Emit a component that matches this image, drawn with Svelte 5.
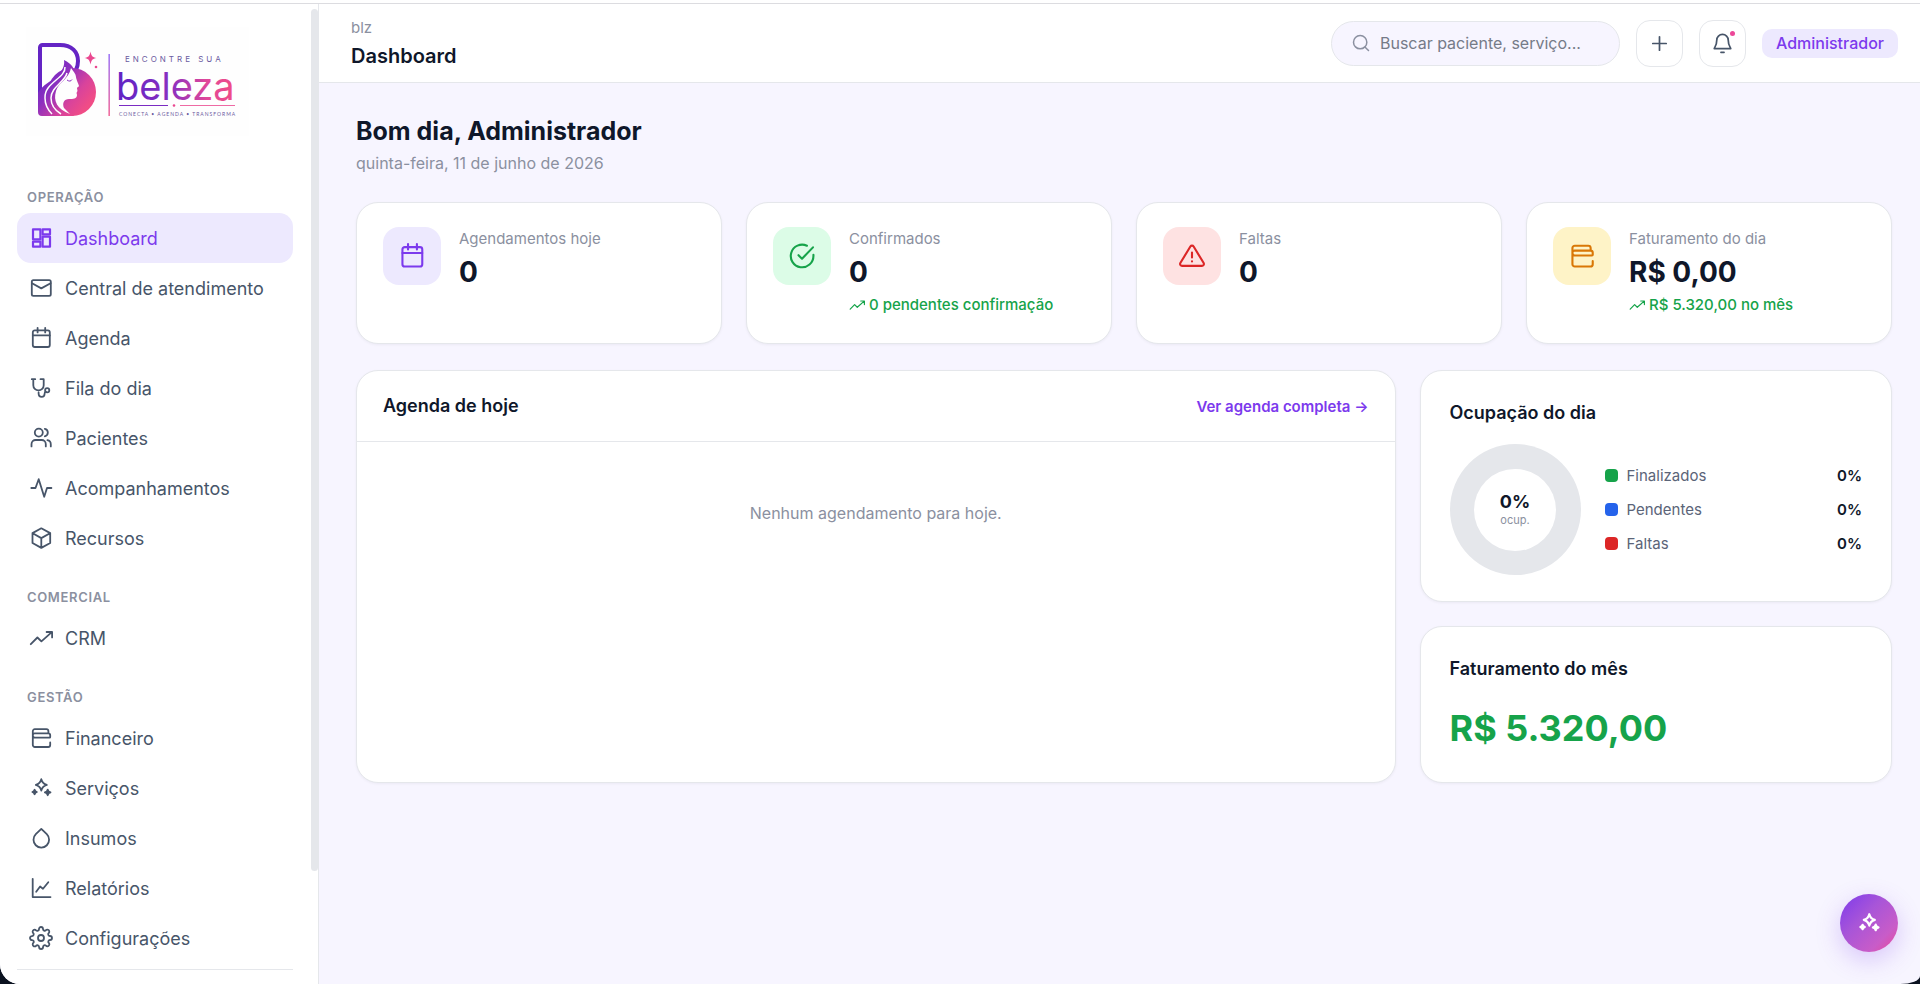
<script>
    const ICONS = {
        dashboard: '<rect x="4" y="3.300" width="7.400" height="10"/><rect x="4" y="15.700" width="7.400" height="5"/><rect x="13.600" y="3.300" width="7.400" height="5"/><rect x="13.600" y="10.700" width="7.400" height="10"/>',
        mail: '<rect x="2.8" y="4.2" width="19" height="15.6" rx="1.6"/><path d="M3 7.2l9.3 5.2 9.3-5.2"/>',
        calendar: '<rect x="3.8" y="4.4" width="17" height="16.6" rx="2"/><path d="M3.8 9.4h17M8.6 1.8v4.6M16.2 1.8v4.6"/>',
        stethoscope: '<path d="M6.2 3.2H2.8M4.3 3.2v6a5.2 5.2 0 0 0 10.4 0v-6h-3.2M9.6 16.4v.9c0 2.2 1.2 3.6 3.1 3.6 2 0 2.9-1.5 2.9-3.2 0-1.1.4-1.8 1.2-2"/><circle cx="18.2" cy="14.2" r="2.1"/>',
        users: '<circle cx="9.8" cy="6.6" r="4"/><path d="M15.8 2.8a3.9 3.9 0 0 1 0 7.6M2.5 20.4v-2.2a4.2 4.2 0 0 1 4.2-4.2h5.9a4.2 4.2 0 0 1 4.2 4.2v2.2M18.4 14.2a4.2 4.2 0 0 1 3.4 4.2v2"/>',
        activity: '<path d="M2.3 12h4.2L9.7 3.2l5.5 17.6L18 12h4.4"/>',
        box: '<path d="M12.3 2.3l8.9 4.8v9.9l-8.900 4.900-8.800-4.900V7.100zM3.700 7.300l8.600 4.800 8.700-4.800M12.300 12.100v9.600"/>',
        trend: '<path d="M1.8 18.2l6.6-6.7 4 3.9L22.8 6.2M17.6 6h5.5v5.4"/>',
        wallet: '<path d="M21.2 16.4v2.600a2 2 0 0 1-2 2H5.800a2 2 0 0 1-2-2V5.200a2 2 0 0 1 2-2h11.600a2 2 0 0 1 2 2v2.200M3.800 9.300c0-1 .8-1.900 1.900-1.900h13.600a1.900 1.900 0 0 1 1.900 1.900V11a.6.6 0 0 1-.6.600H5.700c-1.100 0-1.900-1-1.900-2.300z"/>',
        sparkles: '<path d="M12.3 3.200c.9 3.500 2 4.700 5.500 5.700-3.500 1-4.600 2.200-5.500 5.700-.9-3.500-2-4.700-5.500-5.700 3.500-1 4.600-2.200 5.500-5.700z"/><path fill="currentColor" d="M5.600 13.800l.8 1.400 1.400.8-1.400.8-.8 1.400-.8-1.400-1.400-.8 1.400-.8zM18.700 13.600l.9 1.900 1.900.9-1.900.9-.9 1.900-.9-1.900-1.900-.9 1.900-.9z"/>',
        drop: '<path d="M12.3 2.900l5.500 5.300a7.800 7.800 0 1 1-11 0z"/>',
        chart: '<path d="M3.7 2.800v18.300h17.800M7.200 15.800l3.900-5.300 2.900 2.300 5.300-6.600"/>',
        settings: '<circle cx="12" cy="12" r="3"/><path d="M19.4 15a1.65 1.65 0 0 0 .33 1.82l.06.06a2 2 0 0 1 0 2.83 2 2 0 0 1-2.83 0l-.06-.06a1.65 1.65 0 0 0-1.82-.33 1.65 1.65 0 0 0-1 1.51V21a2 2 0 0 1-2 2 2 2 0 0 1-2-2v-.09A1.65 1.65 0 0 0 9 19.4a1.65 1.65 0 0 0-1.82.33l-.06.06a2 2 0 0 1-2.83 0 2 2 0 0 1 0-2.83l.06-.06a1.65 1.65 0 0 0 .33-1.82 1.65 1.65 0 0 0-1.51-1H3a2 2 0 0 1-2-2 2 2 0 0 1 2-2h.09A1.65 1.65 0 0 0 4.6 9a1.65 1.65 0 0 0-.33-1.82l-.06-.06a2 2 0 0 1 0-2.83 2 2 0 0 1 2.83 0l.06.06a1.65 1.65 0 0 0 1.82.33H9a1.65 1.65 0 0 0 1-1.51V3a2 2 0 0 1 2-2 2 2 0 0 1 2 2v.09a1.65 1.65 0 0 0 1 1.51 1.65 1.65 0 0 0 1.82-.33l.06-.06a2 2 0 0 1 2.83 0 2 2 0 0 1 0 2.83l-.06.06a1.65 1.65 0 0 0-.33 1.82V9a1.65 1.65 0 0 0 1.51 1H21a2 2 0 0 1 2 2 2 2 0 0 1-2 2h-.09a1.65 1.65 0 0 0-1.51 1z"/>',
        check: '<path d="M21.800 11v1a9.700 9.700 0 1 1-5.600-8.800"/><path d="M9 11.300l3 3 9.400-9.700"/>',
        alert: '<path d="M10.600 3.900L2 18a1.700 1.700 0 0 0 1.500 2.500h17A1.700 1.700 0 0 0 22 18L13.400 3.900a1.650 1.650 0 0 0-2.800 0z"/><path d="M12 9v4.200M12 16.600v.1"/>',
        search: '<circle cx="11" cy="11" r="8"/><path d="M21 21l-4-4"/>',
        plus: '<path d="M12 5v14M5 12h14"/>',
        bell: '<path d="M18 8.500a6 6 0 0 0-12 0c0 6-2.600 8-2.600 8.800h17.200c0-.8-2.600-2.800-2.600-8.800zM10.400 21.200h3.200"/>'
    };

    const MENU = [
        {
            title: 'OPERAÇÃO',
            items: [
                { label: 'Dashboard', icon: 'dashboard' },
                { label: 'Central de atendimento', icon: 'mail' },
                { label: 'Agenda', icon: 'calendar' },
                { label: 'Fila do dia', icon: 'stethoscope' },
                { label: 'Pacientes', icon: 'users' },
                { label: 'Acompanhamentos', icon: 'activity' },
                { label: 'Recursos', icon: 'box' }
            ]
        },
        {
            title: 'COMERCIAL',
            items: [{ label: 'CRM', icon: 'trend' }]
        },
        {
            title: 'GESTÃO',
            items: [
                { label: 'Financeiro', icon: 'wallet' },
                { label: 'Serviços', icon: 'sparkles' },
                { label: 'Insumos', icon: 'drop' },
                { label: 'Relatórios', icon: 'chart' },
                { label: 'Configurações', icon: 'settings' }
            ]
        }
    ];

    const stats = [
        { label: 'Agendamentos hoje', value: '0', icon: 'calendar', tone: 'purple' },
        { label: 'Confirmados', value: '0', icon: 'check', tone: 'green', delta: '0 pendentes confirmação' },
        { label: 'Faltas', value: '0', icon: 'alert', tone: 'red' },
        { label: 'Faturamento do dia', value: 'R$ 0,00', icon: 'wallet', tone: 'amber', delta: 'R$ 5.320,00 no mês' }
    ];

    const legend = [
        { label: 'Finalizados', value: 0, tone: 'green' },
        { label: 'Pendentes', value: 0, tone: 'blue' },
        { label: 'Faltas', value: 0, tone: 'red' }
    ];

    let active = $state('Dashboard');
    let search = $state('');
</script>

{#snippet icon(name)}
    <svg class="icon" viewBox="0 0 24 24" aria-hidden="true">{@html ICONS[name]}</svg>
{/snippet}

<div class="window">
    <div class="topline"></div>
    <div class="shell">
        <aside class="sidebar">
            <svg class="logo" viewBox="26 27 223 109" role="img" aria-label="Encontre sua beleza">
                <defs>
                    <linearGradient id="mark" gradientUnits="userSpaceOnUse" x1="42" y1="60" x2="92" y2="100">
                        <stop offset="0" stop-color="#5f22c4" />
                        <stop offset="0.4" stop-color="#8a2fc0" />
                        <stop offset="0.75" stop-color="#d8439c" />
                        <stop offset="1" stop-color="#f04c86" />
                    </linearGradient>
                    <linearGradient id="word" gradientUnits="userSpaceOnUse" x1="118" y1="0" x2="236" y2="0">
                        <stop offset="0" stop-color="#5f22c4" />
                        <stop offset="0.45" stop-color="#8a2fc0" />
                        <stop offset="0.75" stop-color="#e0479a" />
                        <stop offset="1" stop-color="#f04c86" />
                    </linearGradient>
                    <linearGradient id="bar" x1="0" y1="0" x2="0" y2="1">
                        <stop offset="0" stop-color="#8b5cf6" />
                        <stop offset="1" stop-color="#f04c86" />
                    </linearGradient>
                </defs>
                <rect x="26" y="27" width="223" height="109" fill="#fefefe" />
                <!-- letra B -->
                <path d="M40 112V47.500a2.500 2.500 0 0 1 2.500-2.500H60c12 0 18 7 18 16 0 4-1 7-2 9" fill="none" stroke="#6424c4" stroke-width="4" />
                <circle cx="72" cy="92" r="24" fill="url(#mark)" />
                <path d="M38 93c4-8 14-12 20-18 4-4 7-9 6-15 8 4 12 9 10 16L64 100l10 16H42a4 4 0 0 1-4-4z" fill="url(#mark)" />
                <!-- rosto e cabelo -->
                <path d="M71 68c2 3 5 6 5 9 0 2 3 8 3 9s-2 1-2 2 1 3 0 4 0 2 0 3c0 4-4 4-8 4-5 0-7 4-5 9l6 6c-13-5-17-13-14-23 2-8 13-12 15-23z" fill="#fefefe" />
                <path d="M65 67c1 11-21 16-20 31 0 7 3 12 7 16M67 73c-2 9-16 14-16 25 0 8 5 13 10 16" fill="none" stroke="#fefefe" stroke-width="1.5" />
                <path d="M67 80c2 1.500 4 1.500 5-.5" fill="none" stroke="#8a2fc0" stroke-width="1" />
                <path d="M90.500 51.500c.8 4.500 2 5.700 6 6.500-4 .8-5.200 2-6 6.500-.8-4.500-2-5.700-6-6.500 4-.8 5.200-2 6-6.500z" fill="#ea4890" />
                <circle cx="96" cy="67" r="1.3" fill="#ea4890" />
                <rect x="108.500" y="54" width="1.300" height="62" fill="url(#bar)" />
                <text class="logo-top" x="125" y="62">ENCONTRE SUA</text>
                <text class="logo-word" x="116" y="100">beleza</text>
                <path d="M119 105.500h49" stroke="#7a2bc2" />
                <path d="M180 105.500h55" stroke="#ee6aa4" />
                <circle cx="174" cy="105.500" r="1.3" fill="#ea4890" />
                <text class="logo-tag" x="119" y="116">CONECTA • AGENDA • TRANSFORMA</text>
            </svg>

            <nav>
                {#each MENU as group}
                    <div class="group">
                        <h2>{group.title}</h2>
                        {#each group.items as item}
                            <a href="#{item.icon}" class:active={active === item.label} onclick={() => (active = item.label)}>
                                {@render icon(item.icon)}
                                <span>{item.label}</span>
                            </a>
                        {/each}
                    </div>
                {/each}
            </nav>
            <div class="sidebar-footer"></div>
            <div class="thumb"></div>
        </aside>

        <div class="page">
            <header>
                <div class="heading">
                    <span>blz</span>
                    <strong>Dashboard</strong>
                </div>
                <label class="search">
                    {@render icon('search')}
                    <input type="text" aria-label="Buscar" placeholder="Buscar paciente, serviço..." bind:value={search} />
                </label>
                <button class="square" aria-label="Novo">{@render icon('plus')}</button>
                <button class="square" aria-label="Notificações">
                    {@render icon('bell')}
                    <span class="dot"></span>
                </button>
                <span class="role">Administrador</span>
            </header>

            <main>
                <h1>Bom dia, Administrador</h1>
                <p class="date">quinta-feira, 11 de junho de 2026</p>

                <section class="stats">
                    {#each stats as s}
                        <article class="card stat">
                            <div class="stat-icon {s.tone}">{@render icon(s.icon)}</div>
                            <div>
                                <div class="stat-label">{s.label}</div>
                                <div class="stat-value">{s.value}</div>
                                {#if s.delta}
                                    <div class="stat-delta">{@render icon('trend')}{s.delta}</div>
                                {/if}
                            </div>
                        </article>
                    {/each}
                </section>

                <section class="panels">
                    <article class="card agenda">
                        <div class="agenda-head">
                            <h3>Agenda de hoje</h3>
                            <a href="#agenda">Ver agenda completa →</a>
                        </div>
                        <p class="empty">Nenhum agendamento para hoje.</p>
                    </article>

                    <div class="side">
                        <article class="card box">
                            <h3>Ocupação do dia</h3>
                            <div class="occupancy">
                                <div class="donut">
                                    <div class="hole">
                                        <strong>0%</strong>
                                        <span>ocup.</span>
                                    </div>
                                </div>
                                <ul>
                                    {#each legend as l}
                                        <li>
                                            <i class={l.tone}></i>
                                            <span>{l.label}</span>
                                            <b>{l.value}%</b>
                                        </li>
                                    {/each}
                                </ul>
                            </div>
                        </article>
                        <article class="card box">
                            <h3>Faturamento do mês</h3>
                            <div class="total">R$ 5.320,00</div>
                        </article>
                    </div>
                </section>
            </main>
        </div>
    </div>
    <button class="fab" aria-label="Assistente">{@render icon('sparkles')}</button>
</div>

<style>
:global(body) {
    margin: 0;
    background: #0b1220;
}

.window {
    min-height: 100vh;
    display: flex;
    flex-direction: column;
    background: #f7f5ff;
    border-bottom-left-radius: 20px;
    border-bottom-right-radius: 20px 8px;
    overflow: hidden;
    color: #0f172a;
    font-family: Inter, "Open Sans", sans-serif;
    font-size: 15px;
}

.window * {
    box-sizing: border-box;
}

.topline {
    height: 4px;
    background: #fff;
    border-bottom: 1px solid #dcdce0;
}

.shell {
    flex: 1;
    display: flex;
}

h1, h2, h3, p, ul {
    margin: 0;
    padding: 0;
}

button, input {
    font: inherit;
}

.icon {
    width: 24px;
    height: 24px;
    flex: none;
    fill: none;
    stroke: currentColor;
    stroke-width: 1.8;
    stroke-linecap: round;
    stroke-linejoin: round;
}

/* menu lateral */
.sidebar {
    position: relative;
    width: 319px;
    height: calc(100vh - 4px);
    flex: none;
    padding: 23px 25px 0 17px;
    background: #fff;
    border-right: 1px solid #e5e7eb;
    overflow: hidden;
}

.logo {
    display: block;
    width: 223px;
    height: 109px;
    margin: 0 0 52px 9px;
}

.logo-top {
    font-size: 8px;
    letter-spacing: 3px;
    fill: #6b5aa0;
}

.logo-word {
    font-size: 38px;
    fill: url(#word);
}

.logo-tag {
    font-family: Lato, sans-serif;
    font-size: 5px;
    letter-spacing: 1px;
    fill: #6b5aa0;
}

.group {
    margin-bottom: 25px;
}

.group:last-child {
    margin-bottom: 6px;
}

.group h2 {
    margin-bottom: 7px;
    padding-left: 10px;
    font-size: 13px;
    font-weight: 600;
    line-height: 18px;
    letter-spacing: 0.05em;
    color: #8b90a0;
}

.group a {
    display: flex;
    align-items: center;
    gap: 12px;
    height: 50px;
    padding: 0 12px;
    border-radius: 14px;
    font-size: 18px;
    color: #475569;
    text-decoration: none;
    white-space: nowrap;
}

.group a.active {
    background: #ede9fe;
    color: #7c3aed;
}

.group a.active .icon {
    stroke-width: 2.2;
}

.sidebar-footer {
    border-top: 1px solid #e5e7eb;
}

.thumb {
    position: absolute;
    top: 5px;
    right: 0;
    width: 7px;
    height: 88%;
    border-radius: 4px;
    background: #e5e7eb;
}

/* topo */
.page {
    flex: 1;
    min-width: 0;
}

header {
    display: flex;
    align-items: center;
    gap: 16px;
    height: 79px;
    padding: 0 22px 0 32px;
    background: #fff;
    border-bottom: 1px solid #e5e7eb;
}

.heading {
    display: flex;
    flex-direction: column;
    margin-right: auto;
}

.heading span {
    line-height: 26px;
    color: #8b90a0;
}

.heading strong {
    font-size: 20px;
    font-weight: 600;
    line-height: 30px;
}

.search {
    display: flex;
    align-items: center;
    gap: 9px;
    width: 289px;
    height: 45px;
    padding: 0 19px;
    background: #f7f5ff;
    border: 1px solid #e5e7eb;
    border-radius: 24px;
    color: #8b90a0;
}

.search .icon {
    width: 20px;
    height: 20px;
}

.search input {
    flex: 1;
    min-width: 0;
    padding: 0;
    border: 0;
    outline: none;
    background: none;
    font-size: 16px;
    color: #0f172a;
}

.search input::placeholder {
    color: #757b88;
    opacity: 1;
}

.square {
    position: relative;
    display: flex;
    align-items: center;
    justify-content: center;
    width: 47px;
    height: 47px;
    padding: 0;
    background: #fff;
    border: 1px solid #e5e7eb;
    border-radius: 14px;
    color: #475569;
}

.square .icon {
    width: 23px;
    height: 23px;
}

.dot {
    position: absolute;
    top: 10px;
    right: 10px;
    width: 5px;
    height: 5px;
    border-radius: 50%;
    background: #ec4899;
}

.role {
    padding: 0 14px;
    border-radius: 10px;
    background: #ede9fe;
    color: #7c3aed;
    font-size: 16px;
    font-weight: 500;
    line-height: 29px;
}

/* conteúdo */
main {
    padding: 30px 28px 30px 37px;
}

h1 {
    font-size: 25px;
    font-weight: 700;
    line-height: 36px;
}

.date {
    margin-bottom: 25px;
    font-size: 16px;
    line-height: 28px;
    color: #8b90a0;
}

.card {
    background: #fff;
    border: 1px solid #e5e7eb;
    border-radius: 22px;
    box-shadow: 0 1px 3px rgba(15, 23, 42, 0.05);
}

.stats {
    display: grid;
    grid-template-columns: repeat(4, 1fr);
    gap: 24px;
    margin-bottom: 26px;
}

.stat {
    display: flex;
    gap: 18px;
    padding: 24px 26px 26px;
}

.stat-icon {
    display: flex;
    align-items: center;
    justify-content: center;
    width: 58px;
    height: 58px;
    flex: none;
    border-radius: 16px;
}

.stat-icon .icon {
    width: 28px;
    height: 28px;
}

.stat-icon.purple {
    background: #ede9fe;
    color: #7c3aed;
}

.stat-icon.green {
    background: #dcfce7;
    color: #16a34a;
}

.stat-icon.red {
    background: #fee2e2;
    color: #dc2626;
}

.stat-icon.amber {
    background: #fef3c7;
    color: #d97706;
}

.stat-label {
    line-height: 24px;
    color: #8b90a0;
}

.stat-value {
    font-size: 28px;
    font-weight: 700;
    line-height: 42px;
}

.stat-delta {
    display: flex;
    align-items: center;
    gap: 4px;
    line-height: 24px;
    font-weight: 500;
    color: #16a34a;
    white-space: nowrap;
}

.stat-delta .icon {
    width: 16px;
    height: 16px;
}

.panels {
    display: grid;
    grid-template-columns: 2.2fr 1fr;
    gap: 24px;
}

h3 {
    font-size: 18px;
    font-weight: 600;
    line-height: 30px;
}

.agenda-head {
    display: flex;
    align-items: center;
    justify-content: space-between;
    padding: 20px 26px;
    border-bottom: 1px solid #e5e7eb;
}

.agenda-head a {
    color: #7c3aed;
    font-weight: 600;
    text-decoration: none;
}

.empty {
    padding: 56px 26px;
    font-size: 16px;
    line-height: 30px;
    text-align: center;
    color: #8b90a0;
}

.side {
    display: flex;
    flex-direction: column;
    gap: 24px;
}

.box {
    padding: 27px 29px 26px;
}

.box h3 {
    margin-bottom: 16px;
}

.occupancy {
    display: flex;
    align-items: center;
    gap: 24px;
}

.donut {
    display: flex;
    align-items: center;
    justify-content: center;
    width: 131px;
    height: 131px;
    flex: none;
    border-radius: 50%;
    background: #e5e7eb;
}

.hole {
    display: flex;
    flex-direction: column;
    align-items: center;
    justify-content: center;
    width: 82px;
    height: 82px;
    border-radius: 50%;
    background: #fff;
}

.hole strong {
    font-size: 18px;
    font-weight: 700;
    line-height: 20px;
}

.hole span {
    font-size: 11px;
    line-height: 16px;
    color: #8b90a0;
}

ul {
    flex: 1;
    display: flex;
    flex-direction: column;
    gap: 10px;
    list-style: none;
}

li {
    display: flex;
    align-items: center;
    gap: 9px;
    line-height: 24px;
    color: #5b6478;
}

li i {
    width: 13px;
    height: 13px;
    border-radius: 4px;
}

li i.green {
    background: #16a34a;
}

li i.blue {
    background: #2563eb;
}

li i.red {
    background: #dc2626;
}

li b {
    margin-left: auto;
    font-weight: 600;
    color: #0f172a;
}

.total {
    font-size: 36px;
    font-weight: 700;
    line-height: 56px;
    color: #16a34a;
}

.fab {
    position: fixed;
    right: 22px;
    bottom: 32px;
    display: flex;
    align-items: center;
    justify-content: center;
    width: 58px;
    height: 58px;
    padding: 0;
    border: 0;
    border-radius: 50%;
    background: linear-gradient(135deg, #7c3aed, #a855d8 40%, #c85cc8 75%, #ec4899);
    box-shadow: 0 8px 24px rgba(124, 58, 237, 0.25);
    color: #fff;
}

.fab .icon {
    stroke-width: 2.2;
}
</style>
